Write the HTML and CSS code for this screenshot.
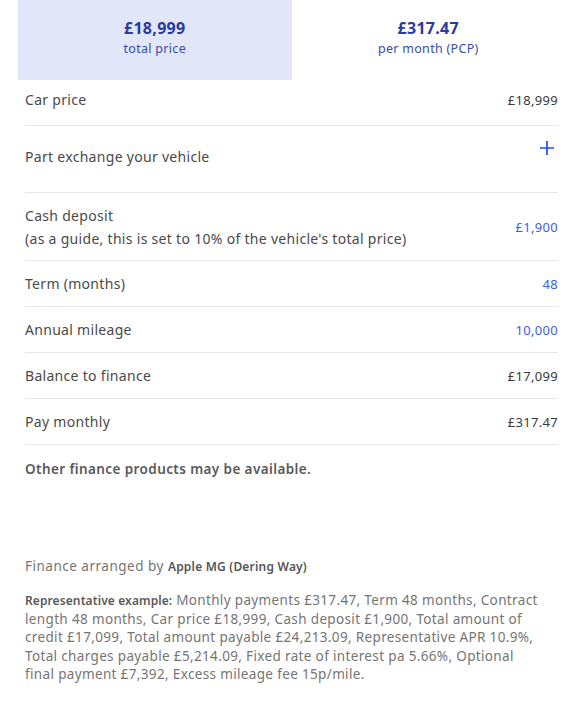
FILE: index.html
```html
<!DOCTYPE html>
<html lang="en">
<head>
<meta charset="utf-8">
<title>Finance</title>
<link rel="stylesheet" href="styles.css">
</head>
<body>
<div class="panel">
  <div class="tabs">
    <div class="tab active">
      <div class="tab-value">£18,999</div>
      <div class="tab-label">total price</div>
    </div>
    <div class="tab">
      <div class="tab-value">£317.47</div>
      <div class="tab-label">per month (PCP)</div>
    </div>
  </div>
  <div class="rows">
    <div class="row row-first">
      <span class="label">Car price</span>
      <span class="value">£18,999</span>
    </div>
    <div class="row row-px">
      <span class="label px-label">Part exchange your vehicle</span>
      <svg class="plus" width="16" height="16" viewBox="0 0 16 16"><path d="M8 1v14M1 8h14" stroke="#2448f5" stroke-width="1.7" fill="none"/></svg>
    </div>
    <div class="row row-tall">
      <div class="label two-line">
        <div>Cash deposit</div>
        <div>(as a guide, this is set to 10% of the vehicle's total price)</div>
      </div>
      <span class="value blue">£1,900</span>
    </div>
    <div class="row">
      <span class="label">Term (months)</span>
      <span class="value blue">48</span>
    </div>
    <div class="row">
      <span class="label">Annual mileage</span>
      <span class="value blue">10,000</span>
    </div>
    <div class="row">
      <span class="label">Balance to finance</span>
      <span class="value">£17,099</span>
    </div>
    <div class="row">
      <span class="label">Pay monthly</span>
      <span class="value">£317.47</span>
    </div>
    <p class="note">Other finance products may be available.</p>
    <p class="arranged">Finance arranged by <strong>Apple MG (Dering Way)</strong></p>
    <p class="example"><strong>Representative example:</strong> Monthly payments £317.47, Term 48 months, Contract length 48 months, Car price £18,999, Cash deposit £1,900, Total amount of credit £17,099, Total amount payable £24,213.09, Representative APR 10.9%, Total charges payable £5,214.09, Fixed rate of interest pa 5.66%, Optional final payment £7,392, Excess mileage fee 15p/mile.</p>
  </div>
</div>
</body>
</html>
```
FILE: styles.css
```css
* { box-sizing: border-box; }
html, body { margin: 0; padding: 0; background: #fff; }
body { font-family: "Noto Sans", "Open Sans", sans-serif; color: #4a4a4a; }
.panel { margin-left: 18px; }
.tabs { display: flex; height: 80px; }
.tab { flex: 1; display: flex; flex-direction: column; align-items: center; justify-content: center; padding-bottom: 4px; }
.tab.active { background: #e1e6f8; }
.tab-value { font-size: 16px; font-weight: 700; color: #2b3a9c; line-height: 20px; letter-spacing: 0.3px; }
.tab-label { font-size: 12.5px; color: #3a4cab; line-height: 18px; margin-top: 2px; letter-spacing: 0.3px; }
.rows { padding: 0 7px; }
.row { display: flex; justify-content: space-between; align-items: center; height: 46px; border-bottom: 1px solid #e8e8e8; font-size: 14px; letter-spacing: 0.3px; }
.row-first { padding-bottom: 6px; }
.label { color: #4a4a4a; }
.value { color: #3a3a3a; font-size: 13px; letter-spacing: 0.3px; }
.value.blue { color: #3d5ce8; }
.row-px { height: 67px; align-items: flex-start; }
.px-label { padding-top: 21px; }
.plus { margin-top: 14px; margin-right: 3px; }
.row-tall { height: 68px; }
.two-line { line-height: 23px; }
.note { margin: 15px 0 0; font-size: 13.5px; font-weight: 600; color: #5a5a5a; letter-spacing: 0.4px; }
.arranged { margin: 79px 0 0; font-size: 13.5px; color: #757575; letter-spacing: 0.5px; }
.arranged strong { font-size: 12px; color: #555; font-weight: 600; letter-spacing: 0.2px; }
.example { margin: 16px 0 0; font-size: 13.5px; line-height: 18.5px; color: #757575; letter-spacing: 0.35px; padding-right: 16px; }
.example strong { font-size: 12px; line-height: 1; color: #5a5a5a; font-weight: 600; letter-spacing: 0.1px; }
```
